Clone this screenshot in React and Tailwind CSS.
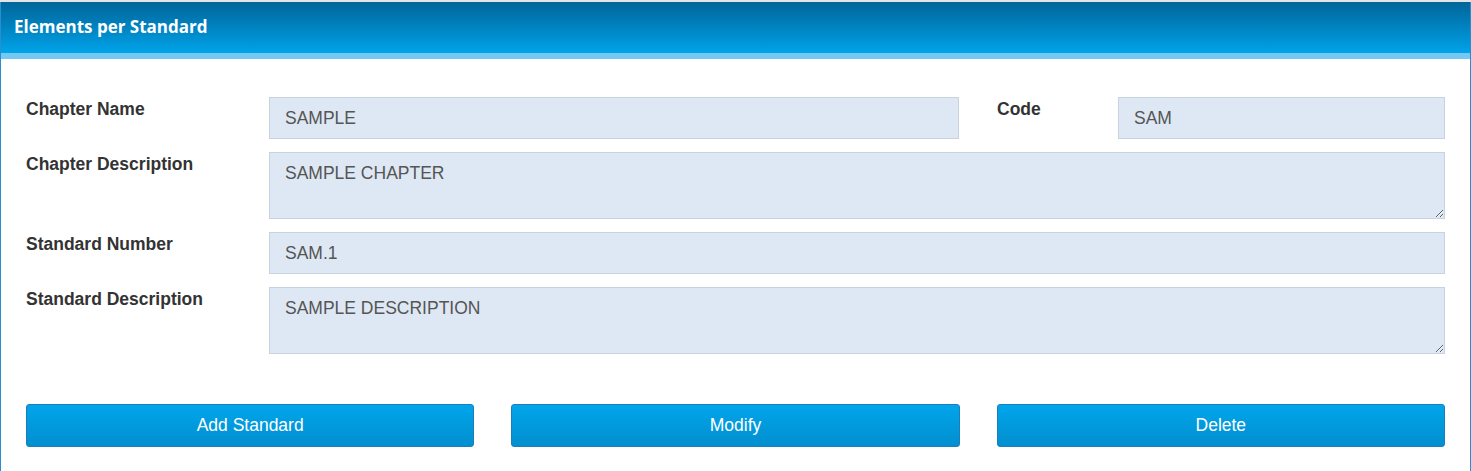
import { useState } from 'react'

// Form values shown in the panel
const INITIAL = {
  chapterName: 'SAMPLE',
  code: 'SAM',
  chapterDescription: 'SAMPLE CHAPTER',
  standardNumber: 'SAM.1',
  standardDescription: 'SAMPLE DESCRIPTION',
}

const labelCls = "text-[17.5px] leading-[24px] font-bold text-[#333333]"
const fieldCls =
  "h-[42px] bg-[#dee8f4] border border-[#c9d3df] px-[15px] text-[17.5px] text-[#555555] outline-none"
const areaCls =
  "h-[67px] w-full bg-[#dee8f4] border border-[#c9d3df] px-[15px] pt-[8px] text-[17.5px] leading-[24px] text-[#555555] outline-none"

function ActionButton({ children }) {
  return (
    <button className="h-[43px] flex-1 rounded-[3px] border border-[#1b7db9] bg-gradient-to-b from-[#00a5eb] to-[#028fcf] text-[17.5px] text-white">
      {children}
    </button>
  )
}

export default function App() {
  const [form, setForm] = useState(INITIAL)
  const set = (key) => (e) => setForm({ ...form, [key]: e.target.value })

  return (
    <div className="min-h-screen bg-white" style={{ fontFamily: '"Liberation Sans", Arial, sans-serif' }}>
      <div className="h-[2px] bg-[#e4e4e4]" />
      <div className="w-[1471px] border-x border-[#2a8dcf] min-h-[469px]">
        {/* Panel heading */}
        <div className="h-[51px] bg-gradient-to-b from-[#00659a] to-[#00a3e9] flex items-center pl-[13px]">
          <h1 className="text-white font-bold text-[17px] pb-[2px]" style={{ fontFamily: '"Open Sans", sans-serif' }}>
            Elements per Standard
          </h1>
        </div>
        <div className="h-[6px] bg-[#74c9f2]" />

        <div className="px-[25px] pt-[38px]">
          <div className="flex flex-col gap-[13px]">
            <div className="flex">
              <label className={`${labelCls} w-[243px] shrink-0`}>Chapter Name</label>
              <input className={`${fieldCls} w-[690px]`} value={form.chapterName} onChange={set('chapterName')} />
              <label className={`${labelCls} w-[121px] shrink-0 ml-[38px]`}>Code</label>
              <input className={`${fieldCls} flex-1 min-w-0`} value={form.code} onChange={set('code')} />
            </div>
            <div className="flex">
              <label className={`${labelCls} w-[243px] shrink-0`}>Chapter Description</label>
              <textarea className={areaCls} value={form.chapterDescription} onChange={set('chapterDescription')} />
            </div>
            <div className="flex">
              <label className={`${labelCls} w-[243px] shrink-0`}>Standard Number</label>
              <input className={`${fieldCls} flex-1 min-w-0`} value={form.standardNumber} onChange={set('standardNumber')} />
            </div>
            <div className="flex">
              <label className={`${labelCls} w-[243px] shrink-0`}>Standard Description</label>
              <textarea className={areaCls} value={form.standardDescription} onChange={set('standardDescription')} />
            </div>
          </div>

          <div className="flex gap-[37px] mt-[50px]">
            <ActionButton>Add Standard</ActionButton>
            <ActionButton>Modify</ActionButton>
            <ActionButton>Delete</ActionButton>
          </div>
        </div>
      </div>
    </div>
  )
}
